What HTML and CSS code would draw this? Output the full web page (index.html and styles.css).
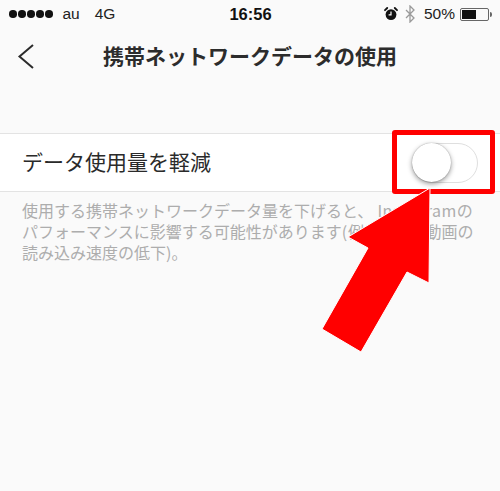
FILE: index.html
```html
<!DOCTYPE html>
<html lang="ja">
<head>
<meta charset="utf-8">
<title>携帯ネットワークデータの使用</title>
<link rel="stylesheet" href="styles.css">
</head>
<body>
<div class="screen">
  <header class="status">
    <div class="status-left">
      <span class="dots"><i></i><i></i><i></i><i></i><i></i></span>
      <span class="carrier">au</span>
      <span class="net">4G</span>
    </div>
    <div class="time">16:56</div>
    <div class="status-right">
      <svg class="alarm" width="14" height="14" viewBox="0 0 14 14"><circle cx="7" cy="7.6" r="5.4" fill="#111"/><path d="M1 3.2 3.2 1M13 3.2 10.8 1" stroke="#111" stroke-width="1.8" stroke-linecap="round"/><path d="M7 4.4v3.4H4.6" stroke="#fff" stroke-width="1.2" fill="none"/></svg>
      <svg class="bt" width="12" height="18" viewBox="0 0 12 18"><path d="M2 5l8 8-4 4V1l4 4-8 8" stroke="#9a9a9a" stroke-width="1.3" fill="none"/></svg>
      <span class="pct">50%</span>
      <span class="battery"><span class="level"></span></span><span class="cap"></span>
    </div>
  </header>
  <nav class="nav">
    <svg class="back" width="18" height="26" viewBox="0 0 18 26"><path d="M17 2 3.500 13.500 17 25" stroke="#2b2b2b" stroke-width="2" fill="none"/></svg>
    <h1 class="title">携帯ネットワークデータの使用</h1>
  </nav>
  <section class="row">
    <span class="row-label">データ使用量を軽減</span>
    <span class="toggle"><span class="knob"></span></span>
  </section>
  <p class="note">使用する携帯ネットワークデータ量を下げると、<span class="latin">Instagram</span>の<br>パフォーマンスに影響する可能性があります<span class="example">(例: 写真や</span>動画の<br>読み込み速度の低下)。</p>
  <div class="callout"></div>
  <svg class="arrow" width="500" height="491" viewBox="0 0 500 491"><polygon points="430,188 348,237 368,248 322,329 361,352 407,272 429,283" fill="#ff0000" stroke="#fff" stroke-width="1"/></svg>
</div>
</body>
</html>
```
FILE: styles.css
```css
* { box-sizing: border-box; }
html, body { margin: 0; padding: 0; }
body { background: #fafafa; font-family: "Liberation Sans", "Noto Sans CJK JP", sans-serif; }
.screen { position: relative; width: 500px; height: 491px; overflow: hidden; background: #fafafa; }
.status { height: 28px; padding: 0 8px 0 9px; display: flex; align-items: center; justify-content: space-between; font-size: 15.500px; color: #222; position: relative; }
.status-left { display: flex; align-items: center; width: 180px; }
.dots { display: flex; gap: 1.500px; margin-right: 10px; }
.dots i { width: 7.500px; height: 7.500px; border-radius: 50%; background: #111; }
.carrier { margin-right: 15px; }
.time { font-weight: 700; font-size: 16.500px; color: #111; }
.status-right { display: flex; align-items: center; width: 180px; justify-content: flex-end; }
.alarm { margin-right: 6px; }
.bt { margin-right: 8px; }
.pct { margin-right: 5px; }
.battery { width: 29px; height: 13px; border: 1px solid #666; border-radius: 2px; padding: 1px; display: block; }
.level { display: block; width: 14px; height: 100%; background: #111; }
.cap { width: 2px; height: 5px; background: #666; border-radius: 0 2px 2px 0; margin-left: 1px; }
.nav { height: 57px; display: flex; align-items: center; justify-content: center; position: relative; }
.back { position: absolute; left: 16px; top: 15px; }
.title { margin: 0; font-size: 21px; font-weight: 700; color: #2c2c2c; font-family: "Noto Sans CJK JP", sans-serif; line-height: 1; position: relative; top: -1px; }
.row { margin-top: 48px; height: 59px; background: #fff; border-top: 1px solid #e3e3e3; border-bottom: 1px solid #e3e3e3; display: flex; align-items: center; justify-content: space-between; padding: 0 22px; }
.row-label { font-family: "Noto Sans CJK JP", sans-serif; font-size: 21px; line-height: 30px; color: #2a2a2a; margin-top: -4px; }
.toggle { width: 66px; height: 40px; border-radius: 20px; background: #fff; border: 1.500px solid #dfdfdf; display: block; position: relative; }
.knob { position: absolute; left: -1px; top: -1px; width: 39px; height: 39px; border-radius: 50%; background: #fff; box-shadow: 0 2px 5px rgba(0,0,0,.4), 0 0 1px rgba(0,0,0,.4); }
.note { margin: 8px 0 0; padding: 0 0 0 22px; font-family: "Noto Sans CJK JP", sans-serif; font-size: 16px; line-height: 21px; color: #adadad; white-space: nowrap; }
.latin { margin-left: 4px; letter-spacing: .5px; }
.example { letter-spacing: .9px; }
.callout { position: absolute; left: 392px; top: 130px; width: 103px; height: 64px; border: 5px solid #ff0000; border-radius: 3px; }
.arrow { position: absolute; left: 0; top: 0; }
```
